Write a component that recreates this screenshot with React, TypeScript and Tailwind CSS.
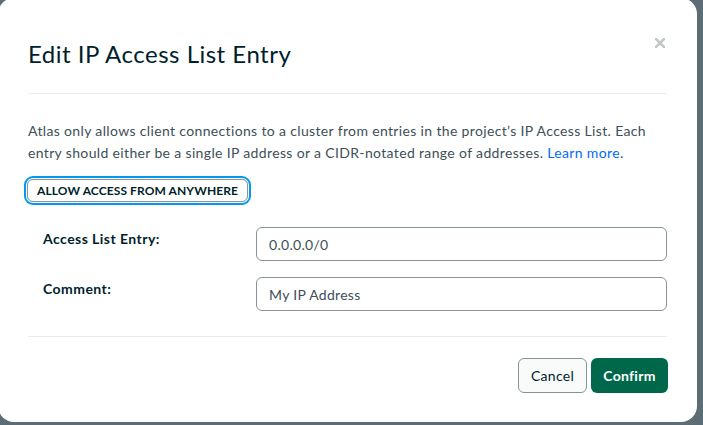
import React from 'react';

const font = { fontFamily: 'Lato, "Noto Sans", sans-serif' };

const FieldRow = ({ label, value }: { label: string; value: string }) => (
  <div className="flex items-start pl-[15px]">
    <label className="w-[213px] pt-[2px] text-[14px] leading-5 font-bold tracking-[0.45px] text-[#001e2b]">{label}</label>
    <input
      readOnly
      value={value}
      className="flex-1 h-[34px] px-3 border border-[#889397] rounded-md text-[14px] tracking-[0.3px] text-[#3d4f58] bg-white outline-none"
      style={font}
    />
  </div>
);

export default function App() {
  return (
    <div className="w-[703px] h-[425px] bg-[#5d6d75] overflow-hidden" style={font}>
      <div className="w-[699px] h-[424px] -ml-[2px] -mt-[2px] bg-white rounded-[16px] px-[30px] pt-[40px] flex flex-col">
        {/* header */}
        <div className="flex items-start justify-between">
          <h2 className="text-[24px] leading-8 tracking-[0.5px] text-[#001e2b]">Edit IP Access List Entry</h2>
          <button className="mt-[0px] mr-[2px] w-[10px] h-[10px]">
            <svg viewBox="0 0 10 10" className="w-[10px] h-[10px]">
              <path d="M1 1 L9 9 M9 1 L1 9" stroke="#c3c7c7" strokeWidth="2.6" strokeLinecap="square" />
            </svg>
          </button>
        </div>
        <div className="mt-[23px] h-px bg-[#e8edeb]" />

        <p className="mt-[26px] text-[14px] leading-[22px] tracking-[0.35px] text-[#3d4f58]">
          Atlas only allows client connections to a cluster from entries in the project’s IP Access List. Each
          <br />
          entry should either be a single IP address or a CIDR-notated range of addresses.{' '}
          <a className="text-[#016bf8]">Learn more</a>.
        </p>

        <div className="mt-[15px] flex">
          <button className="h-[23px] ml-[-1px] px-[9px] border border-[#889397] rounded-md ring-2 ring-[#0498ec] ring-offset-1 text-[12px] font-bold tracking-[0.1px] text-[#001e2b] leading-none">
            ALLOW ACCESS FROM ANYWHERE
          </button>
        </div>

        <div className="mt-[25px] flex flex-col gap-4">
          <FieldRow label="Access List Entry:" value="0.0.0.0/0" />
          <FieldRow label="Comment:" value="My IP Address" />
        </div>

        <div className="mt-[25px] h-px bg-[#e8edeb]" />

        <div className="mt-[21px] flex justify-end gap-1">
          <button className="h-[35px] w-[69px] border border-[#889397] rounded-md bg-[#f9fbfa] text-[14px] tracking-[0.3px] text-[#001e2b]">
            Cancel
          </button>
          <button className="h-[35px] w-[77px] mr-[-1px] rounded-md bg-[#00684a] text-[14px] font-bold tracking-[0.3px] text-white">
            Confirm
          </button>
        </div>
      </div>
    </div>
  );
}
